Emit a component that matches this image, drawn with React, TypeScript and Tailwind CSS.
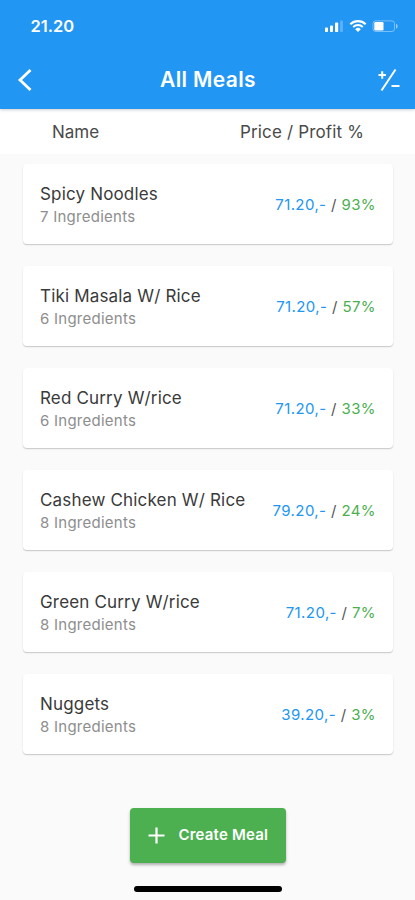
type Meal = {
  id: number
  name: string
  ingredients: number
  price: string
  profit: number
}

const meals: Meal[] = [
  { id: 1, name: 'Spicy Noodles', ingredients: 7, price: '71.20,-', profit: 93 },
  { id: 2, name: 'Tiki Masala W/ Rice', ingredients: 6, price: '71.20,-', profit: 57 },
  { id: 3, name: 'Red Curry W/rice', ingredients: 6, price: '71.20,-', profit: 33 },
  { id: 4, name: 'Cashew Chicken W/ Rice', ingredients: 8, price: '79.20,-', profit: 24 },
  { id: 5, name: 'Green Curry W/rice', ingredients: 8, price: '71.20,-', profit: 7 },
  { id: 6, name: 'Nuggets', ingredients: 8, price: '39.20,-', profit: 3 },
]

function StatusIcons() {
  return (
    <svg width="76" height="16" viewBox="0 0 76 16" fill="none">
      <rect x="1" y="9.5" width="3" height="4.5" rx="0.8" fill="white" />
      <rect x="6" y="7.5" width="3" height="6.5" rx="0.8" fill="white" />
      <rect x="11" y="4.5" width="3.2" height="9.5" rx="0.8" fill="white" />
      <rect x="16" y="2.5" width="3" height="11.5" rx="0.8" fill="white" fillOpacity="0.25" />
      <path d="M26.3 6.2a11 11 0 0 1 15.4 0" stroke="white" strokeWidth="2.2" />
      <path d="M29.2 9a7 7 0 0 1 9.6 0" stroke="white" strokeWidth="2" />
      <path d="M34 14l-2.8-2.8a4 4 0 0 1 5.6 0z" fill="white" />
      <rect x="49" y="2.9" width="21.5" height="10.6" rx="2.6" stroke="white" strokeOpacity="0.4" />
      <rect x="50.3" y="4" width="9.2" height="8.4" rx="1.2" fill="white" />
      <path d="M72 5.8c2.2 1 2.2 4 0 5z" fill="white" fillOpacity="0.5" />
    </svg>
  )
}

function MealCard({ meal }: { meal: Meal }) {
  return (
    <div className="flex h-20 items-center justify-between rounded bg-white pl-[17px] pr-[17px] shadow-[0_1px_1px_rgba(0,0,0,0.14),0_1px_2px_rgba(0,0,0,0.08)]">
      <div className="pt-px">
        <div className="text-[17px] leading-6 tracking-[0.17px] text-[#3a3a3a]">{meal.name}</div>
        <div className="text-[15px] leading-[22px] tracking-[0.25px] text-[#8e8e8e]">
          {meal.ingredients} Ingredients
        </div>
      </div>
      <div className="pt-[2px] text-[15px] leading-5 tracking-[0.4px] text-[#555]">
        <span className="text-[#2196f3]">{meal.price}</span> /{' '}
        <span className="text-[#4caf50]">{meal.profit}%</span>
      </div>
    </div>
  )
}

export default function App() {
  return (
    <div className="flex h-[900px] w-full flex-col bg-[#fafafa] font-['Inter','Liberation_Sans',sans-serif]">
      <header className="z-10 h-[109px] shrink-0 bg-[#2196f3] text-white shadow-[0_1px_3px_rgba(0,0,0,0.2)]">
        <div className="flex h-[53px] items-center justify-between pb-px pl-[30.5px] pr-[15px]">
          <span className="text-[16.5px] font-semibold">21.20</span>
          <StatusIcons />
        </div>
        <div className="flex h-[54px] items-center justify-between pl-[16px] pr-[15px]">
          <button aria-label="Back" className="w-7">
            <svg width="16" height="24" viewBox="0 0 16 24" fill="none">
              <path d="M14.5 2L4 12L14.5 22" stroke="white" strokeWidth="2.8" />
            </svg>
          </button>
          <h1 className="text-[21px] font-semibold tracking-[0.35px]">All Meals</h1>
          <button aria-label="Toggle profit" className="flex w-7 justify-end">
            <svg width="24" height="24" viewBox="0 0 24 24" fill="none" stroke="white">
              <path d="M2.5 7h7.4M6.2 3.3v7.4" strokeWidth="2" />
              <path d="M19.5 1.5L5.5 22.5" strokeWidth="2" />
              <path d="M15.5 18h8" strokeWidth="2" />
            </svg>
          </button>
        </div>
      </header>

      <div className="flex h-[45px] shrink-0 items-center justify-between bg-white pl-[52px] pr-[51px] pt-[2px] text-[17px] text-[#4a4a4a]">
        <span>Name</span>
        <span className="tracking-[0.15px]">Price / Profit %</span>
      </div>

      <div className="flex flex-col gap-[22px] pl-[23px] pr-[22px] pt-[10px]">
        {meals.map(meal => (
          <MealCard key={meal.id} meal={meal} />
        ))}
      </div>

      <div className="mt-[54px] flex flex-col items-center">
        <button className="flex h-[55px] w-[156px] items-center rounded bg-[#4caf50] pl-[18px] text-[15px] font-semibold text-white shadow-[0_2px_3px_rgba(0,0,0,0.3)]">
          <svg width="17" height="17" viewBox="0 0 17 17" stroke="white" strokeWidth="2.2">
            <path d="M8.5 0.5v16M0.5 8.5h16" />
          </svg>
          <span className="ml-[14px] whitespace-nowrap tracking-[0.2px]">Create Meal</span>
        </button>
        <div className="mt-[23px] h-[6px] w-[148px] rounded-full bg-black" />
      </div>
    </div>
  )
}
